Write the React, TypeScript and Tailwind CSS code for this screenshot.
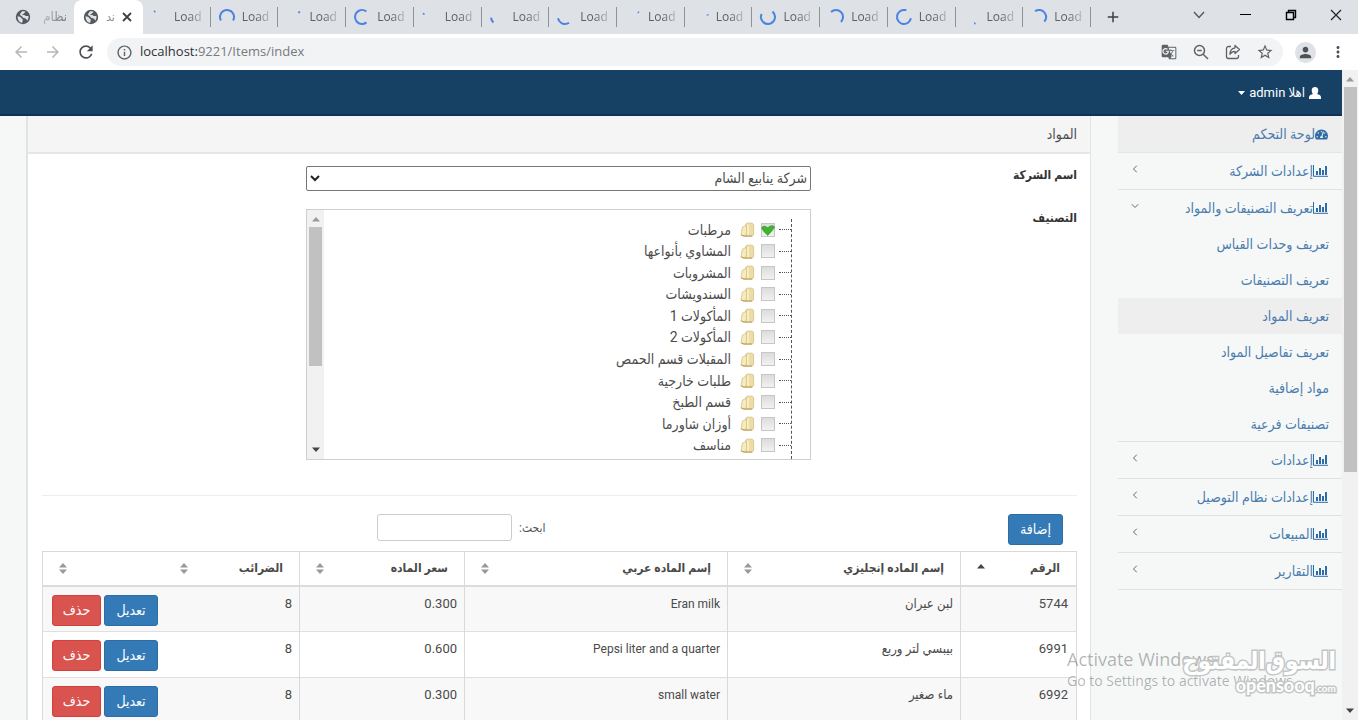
import React from "react";
import { LuChevronLeft, LuChevronDown } from "react-icons/lu";
import { MdArrowBack, MdArrowForward, MdRefresh, MdInfoOutline, MdGTranslate, MdStarBorder, MdPerson, MdMoreVert, MdAdd } from "react-icons/md";
import { FaTachometerAlt } from "react-icons/fa";

const spinners: [number, number][] = [
  [226, 12], [150, 240], [310, 14], [50, 258], [200, 12], [130, 45], [55, 115],
  [315, 10], [338, 10], [310, 255], [225, 180], [10, 280], [60, 12], [235, 165],
];

function Spinner({ start, sweep }: { start: number; sweep: number }) {
  return (
    <svg viewBox="0 0 18 18" className="size-[18px] shrink-0" aria-hidden="true">
      <circle cx="9" cy="9" r="7" fill="none" stroke="#4b83e3" strokeWidth="2" pathLength="360"
        strokeDasharray={`${sweep} ${360 - sweep}`} transform={`rotate(${start} 9 9)`} />
    </svg>
  );
}

function Globe() {
  return (
    <svg viewBox="0 0 16 16" className="size-4 shrink-0" aria-hidden="true">
      <circle cx="8" cy="8" r="7.2" fill="#55585c" />
      <path d="M2.600 7.200c1.600.2 3 .6 3.600 1.700.5 1 1.700.9 1.600 2-.1 1.300-.6 1.700-.5 2.900C4.700 13.600 2.400 11 2.600 7.200zM7 2.300c1-.3 2.400-.2 3.400.3-.2 1.200-1 1-1.500 1.900-.4.8-1.700.5-1.900 1.400.8.3 2.300-.3 3 .6.8 1 2.200.4 3.500.7.200 1.600-.4 3.200-1.400 4.400-.6-.5-.4-1.800-1.400-2.100-1.300-.3-2.700-.2-3.200-1.500C6.900 6.900 5.200 7 5 5.600 4.800 4.300 6.500 4 7 2.300z" fill="#dfe2e8" />
    </svg>
  );
}

function TabStrip() {
  return (
    <div className="flex h-[34px] bg-[#dee1e6] text-[12px] text-[#5c5f63]">
      <div className="flex w-[74px] items-center justify-between pl-[15px] pr-[7px]">
        <Globe />
        <span className="text-[13px] text-[#75787c] [mask-image:linear-gradient(to_right,#0006,#000)]" dir="rtl">نظام</span>
      </div>
      <div className="flex w-[69px] items-center justify-between rounded-t-lg bg-white pl-[9px] pr-[11px]">
        <Globe />
        <span className="text-[12px] text-[#8b8e92]" dir="rtl">ند</span>
        <button aria-label="Close tab">
          <svg viewBox="0 0 10 10" className="size-[10px]"><path d="M1 1l8 8M9 1L1 9" stroke="#3c4043" strokeWidth="1.800" /></svg>
        </button>
      </div>
      <div className="grid w-[948px] grid-cols-[repeat(14,minmax(0,1fr))]">
        {spinners.map(([a, s], i) => (
          <div key={i} className="flex items-center pl-[7px]">
            <Spinner start={a} sweep={s} />
            <span className="ml-[6px] flex-1 overflow-hidden [mask-image:linear-gradient(to_right,#000_45%,#0005_85%)]">Load</span>
            <span className="ml-1 h-5 w-px bg-[#8f9296]" />
          </div>
        ))}
      </div>
      <button aria-label="New tab" className="px-[13px] text-[#3c4043]"><MdAdd size={18} /></button>
      <div className="ml-auto flex items-center pb-[5px] text-black">
        <button aria-label="Search tabs" className="flex w-[46px] justify-center">
          <svg viewBox="0 0 12 8" className="h-2 w-3"><path d="M1 1l5 5.500L11 1" fill="none" stroke="#55585c" strokeWidth="1.400" /></svg>
        </button>
        <button aria-label="Minimize" className="flex w-[46px] justify-center"><span className="h-px w-[11px] bg-black" /></button>
        <button aria-label="Restore" className="flex w-[46px] justify-center">
          <svg viewBox="0 0 12 12" className="size-3"><path d="M1.500 3.500h7V10.500h-7zM3.500 3.500v-2h7v7h-2" fill="none" stroke="#000" strokeWidth="1.400" /></svg>
        </button>
        <button aria-label="Close" className="flex w-[44px] justify-center">
          <svg viewBox="0 0 12 12" className="size-3"><path d="M1 1l10 10M11 1L1 11" stroke="#222" strokeWidth="1.200" /></svg>
        </button>
      </div>
    </div>
  );
}

function Toolbar() {
  return (
    <div className="flex h-9 items-center bg-white pr-[11px] text-[#5f6368]">
      <div className="flex items-center gap-[14px] pl-3">
        <button aria-label="Back" className="text-[#b5b7ba]"><MdArrowBack size={18} /></button>
        <button aria-label="Forward" className="text-[#b5b7ba]"><MdArrowForward size={18} /></button>
        <button aria-label="Reload" className="text-[#4c4f53]"><MdRefresh size={20} /></button>
      </div>
      <div className="ml-[11px] flex h-7 flex-1 items-center rounded-full bg-[#f1f3f4] pl-[9px] pr-[9px]">
        <MdInfoOutline size={17} />
        <span className="ml-[7px] flex-1 text-[13px] text-[#777a7e]"><span className="text-[#2f3134]">localhost:</span>9221/Items/index</span>
        <div className="flex items-center gap-[15px]">
          <button aria-label="Translate"><MdGTranslate size={16} /></button>
          <button aria-label="Zoom">
            <svg viewBox="0 0 18 18" className="size-[18px]" fill="none" stroke="#5f6368" strokeWidth="1.500">
              <circle cx="7.500" cy="7.500" r="5" />
              <path d="M11.200 11.200L16 16M5.200 7.500h4.600" />
            </svg>
          </button>
          <button aria-label="Share">
            <svg viewBox="0 0 16 16" className="size-4" fill="none" stroke="#5f6368" strokeWidth="1.300" strokeLinejoin="round">
              <path d="M6 2.500H3.500a2 2 0 00-2 2v8a2 2 0 002 2h8a2 2 0 002-2V11" />
              <path d="M10 1.500l4.500 4-4.500 4V7.300C7.500 7.300 6 8.300 5 10.300c0-3.500 1.800-6 5-6.500z" />
            </svg>
          </button>
          <button aria-label="Bookmark"><MdStarBorder size={18} /></button>
        </div>
      </div>
      <button aria-label="Profile" className="ml-3 flex size-[21px] items-center justify-center rounded-full bg-[#dee1e6] text-[#4d5156]"><MdPerson size={17} /></button>
      <button aria-label="Menu" className="ml-[13px] text-[#4d5156]"><MdMoreVert size={18} /></button>
    </div>
  );
}

function BarIcon() {
  return (
    <svg viewBox="0 0 15 12" className="h-3 w-[15px] shrink-0" aria-hidden="true">
      <path d="M.5 0v11.300H15" fill="none" stroke="#2f6ca6" strokeWidth="1" />
      <path d="M3 6h2v4H3zM6 3h2v7H6zM9 5h2v5H9zM12 1h2v9h-2z" fill="#2f6ca6" />
    </svg>
  );
}

type Item = { text: string; sub?: string[]; plain?: boolean };
const menu: Item[] = [
  { text: "لوحة التحكم", plain: true },
  { text: "إعدادات الشركة" },
  { text: "تعريف التصنيفات والمواد", sub: ["تعريف وحدات القياس", "تعريف التصنيفات", "تعريف المواد", "تعريف تفاصيل المواد", "مواد إضافية", "تصنيفات فرعية"] },
  { text: "إعدادات" },
  { text: "إعدادات نظام التوصيل" },
  { text: "المبيعات" },
  { text: "التقارير" },
];

function Sidebar() {
  return (
    <nav className="w-[224px] shrink-0 text-[14px] text-[#4a7cae]">
      <ul>
        {menu.map((m) => (
          <li key={m.text} className={m.plain ? "border-b border-[#e4e6e6] bg-[#eeeeee]" : "border-b border-[#e0e2e2]"}>
            <a href="#" className="flex h-9 items-center pl-[11px] pr-[14px]">
              {m.plain ? <FaTachometerAlt size={13} color="#2f6ca6" /> : <BarIcon />}
              <span>{m.text}</span>
              {!m.plain && <span className="mr-auto pb-1 text-[#666]">{m.sub ? <LuChevronDown size={12} /> : <LuChevronLeft size={12} />}</span>}
            </a>
            {m.sub && (
              <ul className="-mb-px">
                {m.sub.map((s) => (
                  <li key={s}>
                    <a href="#" className={s === "تعريف المواد" ? "flex h-9 items-center bg-[#eeeeee] pr-[13px]" : "flex h-9 items-center pr-[13px]"}>{s}</a>
                  </li>
                ))}
              </ul>
            )}
          </li>
        ))}
      </ul>
    </nav>
  );
}

const categories = ["مرطبات", "المشاوي بأنواعها", "المشروبات", "السندويشات", "المأكولات 1", "المأكولات 2", "المقبلات قسم الحمص", "طلبات خارجية", "قسم الطبخ", "أوزان شاورما", "مناسف"];

function FolderIcon() {
  return (
    <svg viewBox="0 0 16 16" className="size-[15px] shrink-0" aria-hidden="true">
      <path d="M6 2.500l1.500-1.300h5.500l1.500 1.300v11L13 15H5z" fill="#eddca4" stroke="#d2be80" strokeWidth=".8" />
      <path d="M2.500 5.500L7 3.500v9.500L4 15.200 1 14z" fill="#f6ebbd" stroke="#d2be80" strokeWidth=".8" />
      <path d="M8.500 3v11" stroke="#fbf5d8" strokeWidth="1.500" />
      <path d="M1.500 13.800l3 1.200h8.500" stroke="#b3964a" strokeWidth="1" fill="none" />
    </svg>
  );
}

function Arrow({ up, dark }: { up?: boolean; dark?: boolean }) {
  return (
    <svg viewBox="0 0 8 5" className="h-[5px] w-2" aria-hidden="true">
      <path d={up ? "M4 0l4 4.500H0z" : "M0 .5h8L4 5z"} fill={dark ? "#444" : "#999"} />
    </svg>
  );
}

function Tree() {
  return (
    <div className="flex h-[251px] border border-[#cfcfcf] bg-white">
      <div className="flex flex-1 flex-col pr-[18px] pt-[9px]">
        <ul className="grid flex-1 auto-rows-fr border-r border-dashed border-[#555] pb-[3px]">
          {categories.map((c, i) => (
            <li key={c} className="flex items-center">
              <span className="h-px w-3 border-t border-dotted border-[#555]" />
              <label className="flex items-center">
                <span className="relative mr-[4px] flex size-[14px]">
                  <input type="checkbox" defaultChecked={i === 0} className="peer size-[14px] appearance-none border border-[#c6c6c6] bg-gradient-to-b from-[#dcdcdc] to-[#f1f1f1]" />
                  <svg viewBox="0 0 13 13" className="pointer-events-none absolute inset-0 hidden size-[14px] peer-checked:block">
                    <path d="M.5 4.500Q2.500 1.500 6.300 4.500 10 .8 12.700 3.800 10 8 6.300 11.500 2.500 8.500.5 4.500z" fill="#3cb62c" stroke="#2a8f1e" strokeWidth=".6" />
                  </svg>
                </span>
                <span className="mr-[6px]"><FolderIcon /></span>
                <span className="mr-[9px] text-[14px] leading-5 text-[#4c4c4c]">{c}</span>
              </label>
            </li>
          ))}
        </ul>
      </div>
      <div className="flex w-[17px] flex-col items-center bg-[#f1f1f1] py-[7px]">
        <Arrow up />
        <div className="mt-[5px] h-[139px] w-[13px] bg-[#c1c1c1]" />
        <div className="mt-auto flex"><Arrow dark /></div>
      </div>
    </div>
  );
}

const rows = [
  ["5744", "لبن عيران", "Eran milk", "0.300", "8"],
  ["6991", "بيبسي لتر وربع", "Pepsi liter and a quarter", "0.600", "8"],
  ["6992", "ماء صغير", "small water", "0.300", "8"],
];
const heads = ["الرقم", "إسم الماده إنجليزي", "إسم الماده عربي", "سعر الماده", "الضرائب", ""];
const cellStyles = [
  "px-[8px] pt-[7px] text-[13px] leading-5",
  "border-r border-[#d9d9d9] px-[7px] pt-[7px] text-[13px] leading-5",
  "border-r border-[#d9d9d9] px-[7px] pt-[7px] text-[12px] leading-5",
  "border-r border-[#d9d9d9] px-[7px] pt-[7px] text-[13px] leading-5",
  "border-r border-[#d9d9d9] px-[7px] pt-[7px] text-[13px] leading-5",
];

function ItemsTable() {
  return (
    <table className="w-full table-fixed border-collapse border border-[#d9d9d9] text-[#4a4a4a]">
      <colgroup>
        <col className="w-[116px]" />
        <col className="w-[233px]" />
        <col />
        <col className="w-[165px]" />
        <col className="w-[136px]" />
        <col className="w-[121px]" />
      </colgroup>
      <thead>
        <tr className="h-[34px] border-b-2 border-[#dcdcdc]">
          {heads.map((h, i) => (
            <th key={i} className={i > 0 && i < 5 ? "border-r border-[#d9d9d9] px-4 text-right text-[12px] font-bold" : "px-4 text-right text-[12px] font-bold"}>
              <div className="flex items-center justify-between">
                <span>{h}</span>
                {i === 0 ? <span className="mb-1"><Arrow up dark /></span> : (
                  <svg viewBox="0 0 8 11" className="h-[11px] w-2"><path d="M4 0l4 4.500H0zM0 6.500h8L4 11z" fill="#999" /></svg>
                )}
              </div>
            </th>
          ))}
        </tr>
      </thead>
      <tbody>
        {rows.map((r) => (
          <tr key={r[0]} className="h-[46px] border-b border-[#dfdfdf] align-top odd:bg-[#f8f8f8]">
            {r.map((c, i) => (
              <td key={i} className={cellStyles[i]}>
                <span dir="auto">{c}</span>
              </td>
            ))}
            <td className="pl-[9px] pt-2">
              <div className="flex justify-end gap-[3px] text-[14px] text-white">
                <button className="h-[31px] w-[54px] shrink-0 rounded-[3px] border border-[#2e6da4] bg-[#337ab7]">تعديل</button>
                <button className="h-[31px] w-[49px] shrink-0 rounded-[3px] border border-[#d43f3a] bg-[#d9534f]">حذف</button>
              </div>
            </td>
          </tr>
        ))}
      </tbody>
    </table>
  );
}

function Card() {
  return (
    <main className="min-w-0 flex-1 border-x border-l-2 border-[#e1e4e4] bg-white">
      <h1 className="flex h-[38px] items-center border-b-2 border-[#e6e6e6] bg-[#f5f5f5] pr-[13px] text-[14px] text-[#4c4c4c]">المواد</h1>
      <div className="pl-[14px] pr-[13px]">
        <div className="grid grid-cols-[266px_minmax(0,505px)] gap-y-[18px] pt-3 text-[12px] text-[#333]">
          <label htmlFor="company" className="font-bold">اسم الشركة</label>
          <div className="relative h-[25px]">
            <select id="company" className="h-[25px] w-full appearance-none rounded-[2px] border border-[#767676] bg-white pr-[3px] text-[14px] text-[#4c4c4c]">
              <option>شركة ينابيع الشام</option>
            </select>
            <svg viewBox="0 0 10 7" className="pointer-events-none absolute left-1 top-[9px] h-[7px] w-[10px]"><path d="M1 1l4 4 4-4" fill="none" stroke="#222" strokeWidth="2" /></svg>
          </div>
          <span className="font-bold">التصنيف</span>
          <Tree />
        </div>
        <hr className="mt-[35px] border-[#eeeeee]" />
        <div className="grid grid-cols-2 pt-[18px]">
          <div className="pr-[14px]">
            <button className="h-[31px] w-[55px] rounded-[3px] border border-[#2e6da4] bg-[#337ab7] text-[14px] text-white">إضافة</button>
          </div>
          <label className="flex h-[27px] items-center gap-[7px] pr-[14px] text-[12px] text-[#555]">
            <span>ابحث:</span>
            <input type="search" className="h-[27px] w-[135px] rounded-[3px] border border-[#ccc] bg-white" />
          </label>
        </div>
        <div className="mt-[6px]"><ItemsTable /></div>
      </div>
    </main>
  );
}

export default function App() {
  return (
    <div className="relative flex h-screen flex-col overflow-hidden bg-[#f6f8f8] font-['Open_Sans','DejaVu_Sans_Condensed','DejaVu_Sans',sans-serif]">
      <TabStrip />
      <Toolbar />
      <div className="flex min-h-0 flex-1">
        <div dir="rtl" className="min-w-0 flex-1 font-['Roboto','DejaVu_Sans_Condensed','DejaVu_Sans',sans-serif]">
          <header className="flex h-[46px] items-center border-b-2 border-[#0f3352] bg-[#164165] pr-[21px] pt-[2px]">
            <button className="flex items-center text-[13px] text-white">
              <svg viewBox="0 0 12 12" className="size-3"><path d="M6 0c2.200 0 3.300 1.500 3.300 3.400S8.300 6.800 8 7C10 7.500 12 8.300 12 10.300V12H0v-1.700C0 8.300 2 7.500 4 7 3.700 6.800 2.700 5.300 2.700 3.400S3.800 0 6 0z" fill="#fff" /></svg>
              <span className="mr-1">اهلا admin</span>
              <svg viewBox="0 0 7 4" className="mr-1 h-1 w-[7px]"><path d="M0 0h7L3.500 4z" fill="#fff" /></svg>
            </button>
          </header>
          <div className="flex items-stretch">
            <Sidebar />
            <div className="w-[27px] shrink-0" />
            <Card />
            <div className="w-[26px] shrink-0" />
          </div>
        </div>
        <div className="flex w-4 flex-col items-center bg-[#f1f1f1] pb-[7px] pt-[7px]">
          <Arrow up />
          <div className="mt-[5px] h-[385px] w-[13px] bg-[#c1c1c1]" />
          <div className="mt-auto flex"><Arrow dark /></div>
        </div>
      </div>
      <div className="pointer-events-none absolute bottom-[29px] right-[56px] w-[235px] text-[#000]/30">
        <p className="text-[18px] leading-6">Activate Windows</p>
        <p className="text-[14px] leading-5">Go to Settings to activate Windows.</p>
      </div>
      <div className="pointer-events-none absolute bottom-[22px] right-[22px] text-right font-bold text-white [-webkit-text-stroke:3px_#c4c6c6] [paint-order:stroke_fill]">
        <p className="font-['DejaVu_Sans_Condensed',sans-serif] text-[24px] leading-7" dir="rtl">السوق‌المفتوح</p>
        <p className="font-['Lato',sans-serif] text-[18px] leading-5">opensooq<span className="text-[10px]">.com</span></p>
      </div>
    </div>
  );
}
